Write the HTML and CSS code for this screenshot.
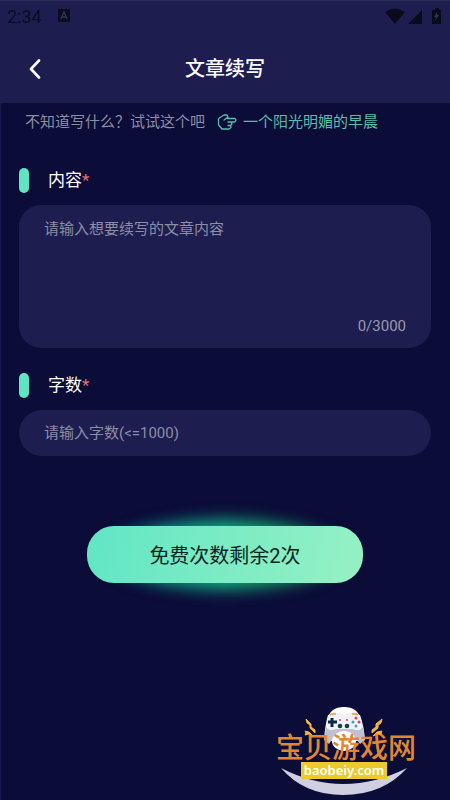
FILE: index.html
```html
<!DOCTYPE html>
<html lang="zh-CN">
<head>
<meta charset="utf-8">
<meta name="viewport" content="width=device-width, initial-scale=1">
<title>文章续写</title>
<link rel="stylesheet" href="styles.css">
</head>
<body>
<header class="top">
  <div class="status">
    <span class="clock">2:34</span>
    <svg class="badge" width="12" height="14" viewBox="0 0 12 14"><rect width="12" height="13" rx="1" fill="#0c0b23"/><path d="M3 10 6 3l3 7M4 8h4" fill="none" stroke="#35345c" stroke-width="1.3"/></svg>
    <svg class="signals" width="57" height="16" viewBox="0 0 57 16" fill="#090a1c"><path d="M0 4Q10-3 20 4L10 16ZM37 2v14H23ZM48 2h2V0h4v2h2v14h-9V2Z"/><path d="m52 4-3 5h2l-1 4 4-6h-2Z" fill="#33325c"/></svg>
  </div>
  <nav class="titlebar">
    <button class="back" aria-label="返回"><svg width="12" height="20" viewBox="0 0 12 20"><path d="M10 1.500 2 10l8 8.500" fill="none" stroke="#fff" stroke-width="2.600" stroke-linecap="round" stroke-linejoin="round"/></svg></button>
    <h1>文章续写</h1>
  </nav>
</header>
<main>
  <p class="hint">
    <span>不知道写什么？试试这个吧</span>
    <a href="#content"><svg width="20" height="16" viewBox="0 0 20 16" fill="none" stroke="currentColor" stroke-width="1.3" stroke-linejoin="round" stroke-linecap="round"><path d="M7 6 11 3 10 1 7 1 1.500 4.500V11L5 15h7l2-1.500-.5-2L15 10l-1-2h3.500Q20 6 18 4.500H10M11 8h3M11 11.500h2.500"/></svg>一个阳光明媚的早晨</a>
  </p>
  <form>
    <label class="label" for="content"><span>内容<span class="star">*</span></span></label>
    <div class="box">
      <textarea id="content" placeholder="请输入想要续写的文章内容"></textarea>
      <span class="count">0/3000</span>
    </div>
    <label class="label second" for="words"><span>字数<span class="star">*</span></span></label>
    <input id="words" class="words" type="text" placeholder="请输入字数(&lt;=1000)">
    <button class="submit" type="button">免费次数剩余2次</button>
  </form>
</main>
<div class="watermark">
  <svg class="art" width="140" height="90" viewBox="0 0 140 90">
    <path d="M5 61Q67 93 131 61Q107 88 67 88Q28 88 5 61Z" fill="#cfcfe1"/>
    <path d="M51 13Q54 0 68 0T85 13Z" fill="#fff"/>
    <path d="M52 8Q60 4 68 8Q76 4 84 8Q88 19 89 33L80 34L76 23H60L56 34L48 33Q49 18 52 8Z" fill="#f1f1f8"/>
    <path d="M50 20Q53 25 60 22H76Q84 25 87 20L89 33L84 37L77 28Q68 23 59 28L53 37L48 33Z" fill="#c0c0d3"/>
    <ellipse cx="68" cy="34" rx="12" ry="10" fill="#fff"/>
    <path d="M54 8q3-2 6-1M76 7q3-1 6 1" fill="none" stroke="#e9ae43" stroke-width="2"/>
    <path d="M56 11v9M52 15h9" stroke="#0d2a42" stroke-width="3"/>
    <g fill="#d84757"><circle cx="80" cy="11" r="1.500"/><circle cx="83" cy="15" r="1.500"/><circle cx="64" cy="13" r="1"/><circle cx="71" cy="13" r="1"/></g>
    <g fill="#35a5be"><circle cx="77" cy="15" r="1.500"/><circle cx="80" cy="19" r="1.500"/></g>
    <circle cx="64" cy="19" r="2.300" fill="#193c51"/><circle cx="71" cy="19" r="2.300" fill="#193c51"/>
    <path d="m30 12 5 5v3l4 3v3l-5-5v-3l-3-2ZM106 12l-6 5v3l-4 3v3l6-5v-3l3-2ZM29 24l4 1 4 4-4-2-4 1 1-2ZM106 24l-5 1-4 4 5-2 4 1-1-2Z" fill="#f6b43b" stroke="#f6b43b"/>
  </svg>
  <span class="brand">宝贝游戏网</span>
  <span class="site">baobeiy.com</span>
</div>
</body>
</html>
```
FILE: styles.css
```css
* { box-sizing: border-box; }
body {
  margin: 0;
  min-height: 100vh;
  position: relative;
  background: #0b0c38;
  box-shadow: inset 1px 0 #17184a;
  font-family: Roboto, "Noto Sans CJK SC", sans-serif;
  color: #fff;
}
button, input, textarea { font: inherit; border: 0; outline: 0; }
.top {
  background: #1e1d50;
  border-top: 1px solid #2b2a5c;
}
.status {
  display: flex;
  align-items: center;
  height: 30px;
  padding: 0 8px 0 7px;
  color: #0c0b23;
}
.clock { font-size: 18px; }
.badge { margin-left: 16px; }
.signals { margin-left: auto; }
.titlebar {
  display: grid;
  grid-template-columns: 70px 1fr 70px;
  align-items: center;
  height: 72px;
  padding-top: 4px;
}
.back {
  display: flex;
  justify-content: center;
  padding: 8px;
  background: none;
}
h1 {
  margin: 0;
  text-align: center;
  font-size: 20px;
  line-height: 30px;
  font-weight: 500;
}
.hint {
  display: flex;
  gap: 12px;
  margin: 0;
  padding: 7px 25px 0;
  font-size: 15px;
  line-height: 24px;
  color: #8d8da3;
  white-space: nowrap;
}
.hint a {
  display: flex;
  align-items: center;
  gap: 6px;
  color: #58bdab;
  text-decoration: none;
}
form { padding: 30px 19px 0; }
.label {
  display: flex;
  align-items: center;
  height: 32px;
  margin-bottom: 9px;
  font-size: 17px;
  line-height: 24px;
}
.label::before {
  content: "";
  width: 10px;
  height: 25px;
  margin-right: 19px;
  border-radius: 5px;
  background: #5fe5c2;
}
.star { color: #e66f76; }
.second { margin-top: 21px; }
.box {
  display: flex;
  flex-direction: column;
  height: 143px;
  padding: 12px 25px 10px;
  border-radius: 22px;
  background: #1e1d50;
  font-size: 15px;
  line-height: 24px;
}
textarea {
  flex: 1;
  padding: 0;
  resize: none;
  background: none;
  color: #fff;
}
::placeholder { color: #8d8da3; opacity: 1; }
.count { align-self: flex-end; color: #9999ae; }
.words {
  display: block;
  width: 100%;
  height: 46px;
  padding: 0 25px;
  border-radius: 23px;
  background: #1e1d50;
  color: #fff;
  font-size: 15px;
}
.submit {
  display: block;
  position: relative;
  width: 67%;
  height: 57px;
  margin: 70px auto 0;
  border-radius: 27px;
  background: linear-gradient(100deg, #61e6c4, #96f1c4);
  color: #09251f;
  font-size: 20px;
}
.submit::before {
  content: "";
  position: absolute;
  inset: -6px 20px;
  z-index: -1;
  border-radius: 50%;
  background: linear-gradient(90deg, #0b8890, #12b183 50%, #168445);
  filter: blur(8px);
}
.watermark {
  position: absolute;
  right: 34px;
  bottom: 3px;
  width: 140px;
  height: 90px;
  text-align: center;
}
.art { position: absolute; inset: 0; }
.brand {
  position: relative;
  display: block;
  padding-top: 28px;
  font-size: 28px;
  line-height: 28px;
  font-weight: 500;
  white-space: nowrap;
  color: #e4862f;
}
.site {
  position: relative;
  display: block;
  width: 86px;
  height: 17px;
  margin: -1px 0 0 25px;
  background: #eacb2d;
  font: 600 13px/16px "Noto Sans", sans-serif;
}
```
